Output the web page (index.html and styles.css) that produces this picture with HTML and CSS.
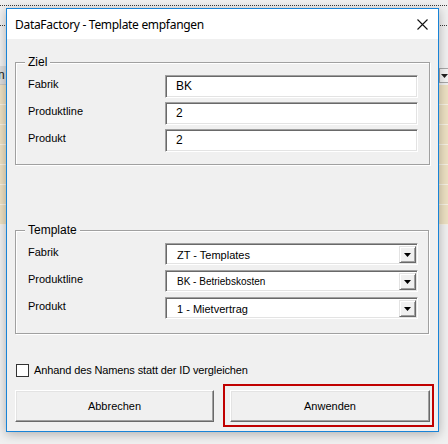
FILE: index.html
```html
<!DOCTYPE html>
<html lang="de">
<head>
<meta charset="utf-8">
<title>DataFactory - Template empfangen</title>
<link rel="stylesheet" href="styles.css">
</head>
<body>
<div class="desk">
  <div class="dots dots-1"></div>
  <div class="dots dots-2"></div>
  <div class="colhead colhead-left"><span>n</span></div>
  <div class="cells cells-left"></div>
  <div class="dropbtn-bg"><svg width="7" height="4" viewBox="0 0 7 4"><path d="M0 0H7L3.5 4Z" fill="#222"/></svg></div>
  <div class="cells cells-right"></div>

  <div class="dialog">
    <div class="titlebar">
      <span class="title">DataFactory - Template empfangen</span>
      <svg class="close" width="11" height="11" viewBox="0 0 11 11"><path d="M0.5 0.5L10.5 10.5M10.5 0.5L0.5 10.5" stroke="#111" stroke-width="1.1" fill="none"/></svg>
    </div>
    <div class="body">
      <div class="frame frame-ziel">
        <span class="legend">Ziel</span>
        <div class="rows rows-ziel">
          <span class="label">Fabrik</span>
          <div class="textbox">BK</div>
          <span class="label">Produktline</span>
          <div class="textbox">2</div>
          <span class="label">Produkt</span>
          <div class="textbox">2</div>
        </div>
      </div>

      <div class="frame frame-template">
        <span class="legend">Template</span>
        <div class="rows rows-template">
          <span class="label">Fabrik</span>
          <div class="combo"><span class="combo-text">ZT - Templates</span><span class="combo-btn"><svg width="7" height="4" viewBox="0 0 7 4"><path d="M0 0H7L3.5 4Z" fill="#000"/></svg></span></div>
          <span class="label">Produktline</span>
          <div class="combo"><span class="combo-text combo-text-small">BK - Betriebskosten</span><span class="combo-btn"><svg width="7" height="4" viewBox="0 0 7 4"><path d="M0 0H7L3.5 4Z" fill="#000"/></svg></span></div>
          <span class="label">Produkt</span>
          <div class="combo"><span class="combo-text">1 - Mietvertrag</span><span class="combo-btn"><svg width="7" height="4" viewBox="0 0 7 4"><path d="M0 0H7L3.5 4Z" fill="#000"/></svg></span></div>
        </div>
      </div>

      <label class="check">
        <span class="checkbox"></span>
        <span class="check-text">Anhand des Namens statt der ID vergleichen</span>
      </label>

      <div class="buttons">
        <div class="btn btn-cancel">Abbrechen</div>
        <div class="btn btn-apply">Anwenden</div>
      </div>
    </div>
  </div>
</div>
</body>
</html>
```

FILE: styles.css
```css
html, body {
  margin: 0;
  padding: 0;
}
body {
  width: 448px;
  height: 444px;
  overflow: hidden;
  background: #f0f0f0;
  font-family: "Liberation Sans", Arial, sans-serif;
  font-size: 11px;
  color: #000;
}
.desk {
  position: relative;
  width: 448px;
  height: 444px;
  background: #f0f0f0;
}
.dots {
  position: absolute;
  left: 0;
  width: 448px;
  height: 1px;
  background: repeating-linear-gradient(90deg, #3c3c3c 0 1px, transparent 1px 2px);
}
.dots-1 { top: 5px; }
.dots-2 { top: 25px; }
.colhead {
  position: absolute;
  top: 66px;
  height: 18px;
  background: #dcdcdc;
  border-bottom: 1px solid #c8c8c8;
  font-size: 12px;
  line-height: 18px;
  color: #222;
}
.colhead-left {
  left: 0;
  width: 7px;
  overflow: hidden;
}
.colhead-left span {
  margin-left: -2px;
}
.cells {
  position: absolute;
  top: 85px;
  height: 140px;
  background: repeating-linear-gradient(180deg, #ece0c2 0 19px, #f6f1e4 19px 20px);
}
.cells-left { left: 0; width: 7px; }
.cells-right { left: 439px; width: 9px; }
.dropbtn-bg {
  position: absolute;
  left: 439px;
  top: 68px;
  width: 11px;
  height: 13px;
  border: 1px solid #a8a8a8;
  background: #f4f4f4;
  display: flex;
  align-items: center;
  padding-left: 1px;
}

.dialog {
  position: absolute;
  left: 6px;
  top: 8px;
  width: 433px;
  height: 424px;
  box-sizing: border-box;
  border: 1px solid #1883d7;
  background: #f0f0f0;
  box-shadow: 0 2px 10px rgba(0, 0, 0, 0.28);
  display: flex;
  flex-direction: column;
}
.titlebar {
  height: 30px;
  background: #fff;
  display: flex;
  align-items: center;
  justify-content: space-between;
  padding: 0 10px 0 8px;
  flex: none;
}
.title {
  font-family: "Noto Sans", "Open Sans", sans-serif;
  font-size: 12px;
  letter-spacing: -0.3px;
  color: #000;
  padding-top: 1px;
}
.close {
  display: block;
  margin-top: 1px;
}
.body {
  flex: 1;
  padding: 23px 8px 0 8px;
  display: flex;
  flex-direction: column;
}
.frame {
  position: relative;
  border: 1px solid #a0a0a0;
  box-shadow: inset 1px 1px 0 #fff, 1px 1px 0 #fff;
  padding: 12px 11px 12px 12px;
}
.frame-template {
  margin-top: 65px;
  margin-right: 1px;
  padding-bottom: 14px;
}
.legend {
  position: absolute;
  top: -8px;
  left: 9px;
  padding: 0 3px;
  background: #f0f0f0;
  line-height: 14px;
  font-size: 12px;
}
.rows {
  display: grid;
  grid-template-columns: 137px 1fr;
  align-items: start;
}
.rows-ziel {
  grid-auto-rows: 23px;
  row-gap: 4px;
}
.rows-template {
  grid-auto-rows: 22px;
  row-gap: 5px;
  margin-right: -1px;
}
.label {
  padding-top: 2px;
  line-height: 14px;
  font-size: 11px;
}
.textbox, .combo {
  box-sizing: border-box;
  height: 100%;
  background: #fff;
  border-style: solid;
  border-width: 1px;
  border-color: #a0a0a0 #fff #fff #a0a0a0;
  box-shadow: inset 1px 1px 0 #696969, inset -1px -1px 0 #e3e3e3;
}
.textbox {
  padding: 0 0 0 10px;
  line-height: 21px;
  font-size: 12px;
}
.combo {
  display: flex;
  align-items: stretch;
  padding: 2px 1px 1px 2px;
}
.combo-text {
  flex: 1;
  padding-left: 9px;
  line-height: 18px;
  font-size: 11px;
}
.combo-text-small {
  font-size: 10px;
}
.combo-btn {
  width: 17px;
  box-sizing: border-box;
  background: #f0f0f0;
  border-style: solid;
  border-width: 1px;
  border-color: #e3e3e3 #696969 #696969 #e3e3e3;
  box-shadow: inset 1px 1px 0 #fff, inset -1px -1px 0 #a0a0a0;
  display: flex;
  align-items: center;
  justify-content: center;
  padding-top: 1px;
}
.combo-btn svg {
  display: block;
}
.check {
  display: flex;
  align-items: center;
  gap: 5px;
  margin-top: 30px;
  margin-left: 1px;
  height: 13px;
}
.checkbox {
  width: 13px;
  height: 13px;
  box-sizing: border-box;
  background: #fff;
  border: 1px solid #333;
}
.check-text {
  font-size: 11px;
  letter-spacing: -0.12px;
  line-height: 13px;
}
.buttons {
  display: flex;
  margin-top: 13px;
  gap: 16px;
}
.btn {
  position: relative;
  height: 32px;
  box-sizing: border-box;
  background: #f0f0f0;
  border-style: solid;
  border-width: 1px;
  border-color: #fff #696969 #696969 #fff;
  box-shadow: inset -1px -1px 0 #a0a0a0, inset 1px 1px 0 #e3e3e3;
  display: flex;
  align-items: center;
  justify-content: center;
  font-size: 11px;
}
.btn-cancel {
  width: 200px;
}
.btn-apply {
  width: 201px;
}
.btn-apply::before {
  content: "";
  position: absolute;
  top: -7px;
  left: -8px;
  right: -5px;
  bottom: -6px;
  border: 2px solid #c00000;
}
```
